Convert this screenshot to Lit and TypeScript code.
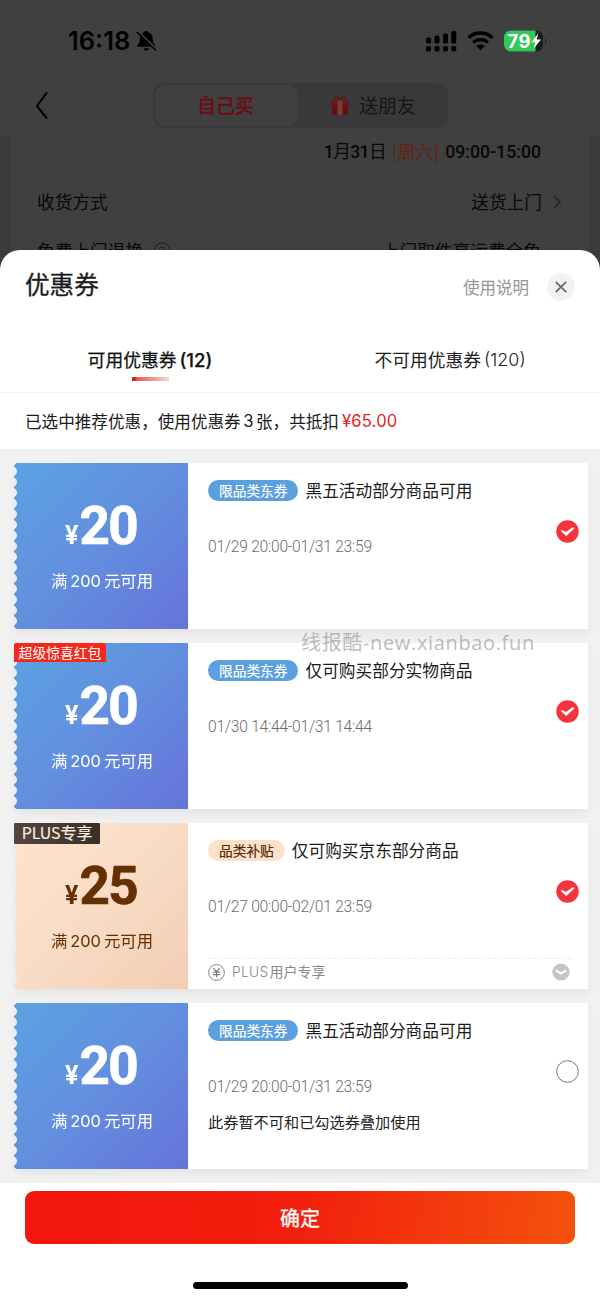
import { LitElement, html, css, svg, nothing } from "lit";
import { customElement, property, state } from "lit/decorators.js";
import { classMap } from "lit/directives/class-map.js";

interface Coupon {
  kind: "blue" | "plus";
  amount: string;
  ribbon?: string;
  pill: string;
  title: string;
  period: string;
  checked: boolean;
  note?: string;
  footer?: string;
}

const COUPONS: Coupon[] = [
  { kind: "blue", amount: "20", pill: "限品类东券", title: "黑五活动部分商品可用", period: "01/29 20:00-01/31 23:59", checked: true },
  { kind: "blue", amount: "20", ribbon: "超级惊喜红包", pill: "限品类东券", title: "仅可购买部分实物商品", period: "01/30 14:44-01/31 14:44", checked: true },
  { kind: "plus", amount: "25", ribbon: "PLUS专享", pill: "品类补贴", title: "仅可购买京东部分商品", period: "01/27 00:00-02/01 23:59", checked: true, footer: "用户专享" },
  { kind: "blue", amount: "20", pill: "限品类东券", title: "黑五活动部分商品可用", period: "01/29 20:00-01/31 23:59", checked: false, note: "此券暂不可和已勾选券叠加使用" },
];

@customElement("coupon-card")
export class CouponCard extends LitElement {
  @property({ attribute: false }) coupon!: Coupon;

  static styles = css`
    :host { display: block; }
    .card { position: relative; display: flex; height: 166px; }
    .card::before {
      content: ""; position: absolute; inset: 0 0 0 3px;
      box-shadow: 0 5px 9px rgba(0, 0, 0, 0.055);
    }
    .value {
      position: relative; width: 174px; flex: none; box-sizing: border-box; padding-top: 39px;
      display: flex; flex-direction: column; align-items: center; color: #fff;
      background: linear-gradient(135deg, #5ba2e2 0%, #6291df 45%, #6673da 100%);
      -webkit-mask: radial-gradient(circle at -2px 5.35px, transparent 4.6px, #000 5.2px) 0 3px / 100% 10.7px repeat-y;
      mask: radial-gradient(circle at -2px 5.35px, transparent 4.6px, #000 5.2px) 0 3px / 100% 10.7px repeat-y;
    }
    .plus .value { color: #653000; background: linear-gradient(135deg, #fde4d0 0%, #f9dcc5 50%, #f2cdb2 100%); }
    .price { display: flex; align-items: baseline; height: 48px; line-height: 48px; font-family: Roboto, sans-serif; font-weight: 700; }
    .yen { font-size: 25px; margin-right: 1px; }
    .num { font-size: 53px; letter-spacing: -1.6px; -webkit-text-stroke: 0.7px currentColor; }
    .rule { margin: 19px 0 0 2px; height: 22px; line-height: 22px; font-size: 16.4px; display: flex; gap: 3px; }
    .rule .n { font-family: Inter, sans-serif; font-size: 16.4px; padding-top: 1px; }
    .ribbon {
      position: absolute; left: 0; top: 0; height: 19px; line-height: 19px; width: 92px; text-align: center;
      font-size: 13.8px; color: #fff; background: #f3291c; border-radius: 2px 3px 0 0;
    }
    .plus .ribbon { width: 86px; height: 21px; line-height: 20px; font-size: 15.9px; -webkit-text-stroke: 0.15px currentColor; color: #fff0df; background: linear-gradient(90deg, #54463e, #392e28); border-radius: 1px; }
    .body { position: relative; flex: 1; min-width: 0; background: #fff; display: flex; flex-direction: column; padding-left: 20px; }
    .main { flex: 1; display: flex; }
    .info { flex: 1; }
    .head { display: flex; align-items: center; gap: 7px; height: 21px; margin-top: 17px; }
    .pill {
      height: 21px; line-height: 20px; border-radius: 11px; padding: 0 11px; font-size: 13.7px; -webkit-text-stroke: 0.2px currentColor;
      color: #fff; background: #5ba0de;
    }
    .plus .pill { background: #fde2c9; color: #54290a; }
    .title { font-size: 16.7px; line-height: 21px; height: 22px; color: #1b1b1b; }
    .period { margin-top: 35px; line-height: 22px; height: 22px; font-family: Roboto, sans-serif; font-weight: 300; font-size: 15.6px; letter-spacing: -0.24px; color: #6c6c6c; white-space: pre; }
    .note { margin-top: 12px; font-size: 15.2px; line-height: 22px; color: #222; }
    .pick { width: 23px; height: 23px; margin: 57px 9.5px 0 0; }
    .foot { height: 31px; margin-right: 17px; display: flex; align-items: center; font-size: 14px; line-height: 20px; color: #888; border-top: 1px dashed #ececec; box-sizing: border-box; padding-bottom: 4px; }
    .foot .label { flex: 1; margin: -2px 0 0 7px; display: flex; gap: 1px; }
    .foot .latin { font-family: Inter, sans-serif; font-weight: 300; font-size: 13.8px; letter-spacing: 0.3px; padding-top: 1px; }
    .foot .more { margin-right: 1px; }
  `;

  render() {
    const c = this.coupon;
    return html`
      <div class=${classMap({ card: true, plus: c.kind === "plus" })}>
        <div class="value">
          <div class="price"><span class="yen">¥</span><span class="num">${c.amount}</span></div>
          <div class="rule"><span>满</span><span class="n">200</span><span>元可用</span></div>
        </div>
        <div class="body">
          <div class="main">
            <div class="info">
              <div class="head"><span class="pill">${c.pill}</span><span class="title">${c.title}</span></div>
              <div class="period">${c.period}</div>
              ${c.note ? html`<div class="note">${c.note}</div>` : nothing}
            </div>
            <svg class="pick" viewBox="0 0 23 23">
              ${c.checked
                ? svg`<circle cx="11.5" cy="11.5" r="11.2" fill="#f6333a"/><path d="M4.8 11 6.4 10 9.9 11.9 17 7 18.3 8.4 10.2 15.9Z" fill="#fff"/>`
                : svg`<circle cx="11.5" cy="11.5" r="10.8" fill="#fff" stroke="#777" stroke-width="1"/>`}
            </svg>
          </div>
          ${c.footer
            ? html`<div class="foot">
                <svg width="17" height="17" viewBox="0 0 17 17" fill="none" stroke="#777">
                  <circle cx="8.5" cy="8.5" r="7.9" stroke-width="0.9" />
                  <path d="M5.4 4 8.5 7.9 11.6 4M8.5 7.9V13.2M5.1 8.2H11.9M5.1 10.7H11.9" stroke-width="1.2" />
                </svg>
                <span class="label"><span class="latin">PLUS</span><span>${c.footer}</span></span>
                <svg class="more" width="18" height="18" viewBox="0 0 18 18">
                  <circle cx="9" cy="9" r="8.6" fill="#c5c5c5" />
                  <path d="M3.8 7.4 9 10.4 14.2 7.4" fill="none" stroke="#fff" stroke-width="2.2" />
                </svg>
              </div>`
            : nothing}
        </div>
        ${c.ribbon ? html`<span class="ribbon">${c.ribbon}</span>` : nothing}
      </div>
    `;
  }
}

@customElement("app-root")
export class AppRoot extends LitElement {
  @state() private tab = 0;

  static styles = css`
    :host {
      display: block; width: 600px; height: 1300px; overflow: hidden; position: relative; background: #404040;
      font-family: "Noto Sans CJK SC", sans-serif; color: #1b1b1b;
    }
    .back { height: 270px; overflow: hidden; color: #080808; }
    .status { display: flex; align-items: center; height: 82px; padding: 0 53px 0 68px; color: #000; box-sizing: border-box; }
    .time { font: 600 25.5px/30px Inter, sans-serif; width: 68px; white-space: nowrap; }
    .status .grow { flex: 1; }
    .status .wifi { margin-left: 10px; }
    .status .battery { margin-left: 10px; }
    .nav { display: flex; height: 54px; align-items: flex-start; padding-left: 34px; }
    .arrow { margin-top: 9px; width: 119px; }
    .seg { display: flex; width: 295px; height: 45px; margin-top: 1px; background: #39393c; border-radius: 12px; padding: 2px; box-sizing: border-box; font-size: 18.8px; }
    .seg .on { width: 141px; border-radius: 11px; background: #404040; color: #6e0b12; -webkit-text-stroke: 0.5px currentColor; text-align: center; line-height: 40px; padding-right: 2px; }
    .seg .off { flex: 1; display: flex; justify-content: center; align-items: center; gap: 9px; color: #151515; line-height: 40px; padding-left: 2px; }
    .seg .off span { height: 41px; }
    .rows { border: solid #3b3b3b; border-width: 0 11px; padding: 0 47px 0 26px; font-size: 17.7px; }
    .when { display: flex; justify-content: flex-end; height: 32px; line-height: 33px; gap: 6px; font-family: Roboto, "Noto Sans CJK SC", sans-serif; font-weight: 500; font-size: 17.7px; padding-right: 1px; }
    .when .date { letter-spacing: -0.7px; }
    .when .cjk { font-weight: 400; }
    .when .day { color: #6e1d16; font-weight: 400; font-family: "Noto Sans CJK SC", sans-serif; line-height: 31px; }
    .row { display: flex; justify-content: space-between; align-items: center; height: 49px; line-height: 49px; }
    .row.first { margin-top: 9px; }
    .row .end { display: flex; align-items: center; }
    .row .chev { margin: 0 -21px 0 9px; }
    .row .q { display: flex; align-items: center; gap: 10px; }
    .row .tail { padding-right: 1px; }
    .sheet { position: relative; margin-top: -20px; height: 1050px; background: #fff; border-radius: 20px 20px 0 0; display: flex; flex-direction: column; }
    .top { height: 74px; display: flex; align-items: center; padding: 0 25px; }
    .top .name { flex: 1; font-size: 24.6px; -webkit-text-stroke: 0.3px currentColor; line-height: 36px; margin-top: -8px; }
    .top .help { font-size: 16.5px; color: #969696; margin-right: 18px; }
    .tabs { display: flex; height: 69px; border-bottom: 1px solid #f3f3f3; box-sizing: border-box; }
    .tab { flex: 1; display: flex; flex-direction: column; align-items: center; padding-top: 22px; font-size: 17.8px; line-height: 26px; color: #222; }
    .tab .t { display: flex; gap: 3px; }
    .tab .c { font-family: Inter, sans-serif; font-size: 17.9px; font-weight: 300; padding-top: 1px; height: 25px; }
    .tab.sel { color: #111; }
    .tab.sel .t { -webkit-text-stroke: 0.25px currentColor; }
    .tab.sel .c { font-weight: 500; font-size: 18.6px; }
    .bar { width: 37px; height: 4px; margin-top: 5px; background: linear-gradient(90deg, #c82120 0 8%, #e55b55 14%, #f9d6d4); }
    .sum { height: 56px; line-height: 57px; padding-left: 25px; font-size: 16.6px; display: flex; }
    .sum > span { height: 56px; }
    .sum .n { font-family: Inter, sans-serif; margin: 0 2.5px; }
    .sum .money { font-family: Inter, sans-serif; color: #e1251b; margin-left: 3px; letter-spacing: 0.2px; }
    .list { height: 734px; box-sizing: border-box; background: #f1f1f1; padding: 14px 12px 0 14px; display: flex; flex-direction: column; gap: 14px; }
    .ok { margin: 8px 25px 0; height: 53px; border: 0; padding: 0; border-radius: 9px; background: linear-gradient(100deg, #f3150e, #f2200d 50%, #f4520d); color: #fff; font: 400 20px/53px "Noto Sans CJK SC", sans-serif; -webkit-text-stroke: 0.3px currentColor; }
    .home { width: 215px; height: 7px; border-radius: 4px; background: #000; margin: 38px auto 0; }
    .mark { position: absolute; left: 301px; top: 379px; line-height: 28px; font-family: "Open Sans", "Noto Sans CJK SC", sans-serif; font-size: 20px; letter-spacing: 0.65px; color: rgba(145, 145, 145, 0.62); white-space: nowrap; }
  `;

  render() {
    return html`
      <div class="back">
        <div class="status">
          <span class="time">16:18</span>
          <svg width="21" height="22" viewBox="0 0 21 22">
            <path d="M10.3 1C12 1 12.4 2 12.7 2.5 15.2 3.3 16.4 5.3 16.6 8.2 16.8 12 17.6 13.4 19 15 19.6 15.8 19.2 16.8 18 16.8H2.6C1.3 16.8.9 15.8 1.6 15 3 13.4 3.9 12 4 8.2 4.2 5.3 5.5 3.3 7.9 2.5 8.2 2 8.6 1 10.3 1ZM7.4 18.2H13.2C12.7 19.8 11.7 20.6 10.3 20.6S7.9 19.8 7.4 18.2Z" fill="#000" />
            <path d="M2 2.2 20 19.4" stroke="#404040" stroke-width="3" />
            <path d="M1 2.2 19.5 20" stroke="#000" stroke-width="1.5" stroke-linecap="round" />
          </svg>
          <span class="grow"></span>
          <svg width="31" height="21" viewBox="0 0 31 21">
            <rect x="0" y="6.5" width="5" height="6" rx="1.5" /><rect x="8.5" y="4.5" width="5" height="8" rx="1.5" />
            <rect x="17" y="2.5" width="5" height="10" rx="1.5" /><rect x="25.3" y="0" width="5" height="12.5" rx="1.5" />
            <rect x="0" y="15" width="5" height="5.5" rx="1.8" /><rect x="8.5" y="15" width="5" height="5.5" rx="1.8" />
            <rect x="17" y="15" width="5" height="5.5" rx="1.8" /><rect x="25.3" y="15" width="5" height="5.5" rx="1.8" />
          </svg>
          <svg class="wifi" width="27" height="20" viewBox="0 0 27 20" fill="none" stroke="#000">
            <path d="M1.6 6.8C8 .4 19 .4 25.4 6.8M6.1 11.5C10.2 7.6 16.8 7.6 20.9 11.5" stroke-width="3.4" />
            <path d="M13.5 19.2 9.2 15C11.6 13 15.4 13 17.8 15Z" fill="#000" stroke="none" />
          </svg>
          <svg class="battery" width="43" height="22" viewBox="0 0 43 22">
            <rect x="0" y="0.5" width="39" height="21" rx="6.5" fill="#1c1c1c" />
            <path d="M6.5.5H31.5V21.5H6.5A6.5 6.5 0 0 1 0 15V7A6.5 6.5 0 0 1 6.5.5Z" fill="#34c759" />
            <path d="M41 8Q43.3 11 41 14Z" fill="#1c1c1c" />
            <text x="3.6" y="17.5" font-family="Inter" font-weight="700" font-size="18.5" textLength="23" fill="#fff">79</text>
            <path d="M34.2 3.5 27.4 12.2H31.3L29.8 18.6 37 9.6H32.8Z" fill="#fff" />
          </svg>
        </div>
        <div class="nav">
          <svg class="arrow" width="119" height="30" viewBox="0 0 119 30"><path d="M12.5 2 3 15 12.5 27" fill="none" stroke="#000" stroke-width="2.1" stroke-linecap="round" /></svg>
          <div class="seg">
            <span class="on">自己买</span>
            <span class="off">
              <svg width="20" height="20" viewBox="0 0 20 20">
                <path d="M4 1.5Q9 0 10 5 11 0 16 1.5" fill="none" stroke="#681414" stroke-width="1.8" />
                <rect x="1" y="4.5" width="18" height="6" rx="1.5" fill="#6b1518" /><rect x="2" y="10" width="16" height="9" rx="1.5" fill="#621014" />
                <rect x="7.5" y="4.5" width="5" height="14.5" fill="#744033" />
              </svg>
              <span>送朋友</span>
            </span>
          </div>
        </div>
        <div class="rows">
          <div class="when"><span class="date">1<span class="cjk">月</span>31<span class="cjk">日</span></span><span class="day">[周六]</span><span>09:00-15:00</span></div>
          <div class="row first">
            <span>收货方式</span>
            <span class="end">送货上门<svg class="chev" width="12" height="16" viewBox="0 0 12 16"><path d="M3 2 9 8 3 14" fill="none" stroke="#262626" stroke-width="1.7" /></svg></span>
          </div>
          <div class="row">
            <span class="q">免费上门退换
              <svg width="18" height="18" viewBox="0 0 18 18" fill="none" stroke="#1c1c1c"><circle cx="9" cy="9" r="8" /><path d="M6.5 7Q6.8 5 9 5T11.5 7Q11.5 8.3 9 9.5V11M9 12.5V13.8" /></svg>
            </span>
            <span class="tail">上门取件享运费全免</span>
          </div>
        </div>
      </div>
      <div class="sheet">
        <div class="top">
          <span class="name">优惠券</span><span class="help">使用说明</span>
          <svg width="28" height="28" viewBox="0 0 28 28"><circle cx="14" cy="14" r="13.8" fill="#f2f2f2" /><path d="M8.8 8.8 19.2 19.2M19.2 8.8 8.8 19.2" stroke="#666" stroke-width="1.7" /></svg>
        </div>
        <div class="tabs">
          ${[["可用优惠券", "(12)"], ["不可用优惠券", "(120)"]].map(
            ([label, count], i) => html`<div class=${classMap({ tab: true, sel: this.tab === i })} @click=${() => (this.tab = i)}>
              <span class="t"><span>${label}</span><span class="c">${count}</span></span>
              ${this.tab === i ? html`<span class="bar"></span>` : nothing}
            </div>`
          )}
        </div>
        <div class="sum"><span>已选中推荐优惠，使用优惠券</span><span class="n">3</span><span>张，共抵扣</span><span class="money">¥65.00</span></div>
        <div class="list">${COUPONS.map((c) => html`<coupon-card .coupon=${c}></coupon-card>`)}</div>
        <button class="ok">确定</button>
        <div class="home"></div>
        <span class="mark">线报酷-new.xianbao.fun</span>
      </div>
    `;
  }
}
